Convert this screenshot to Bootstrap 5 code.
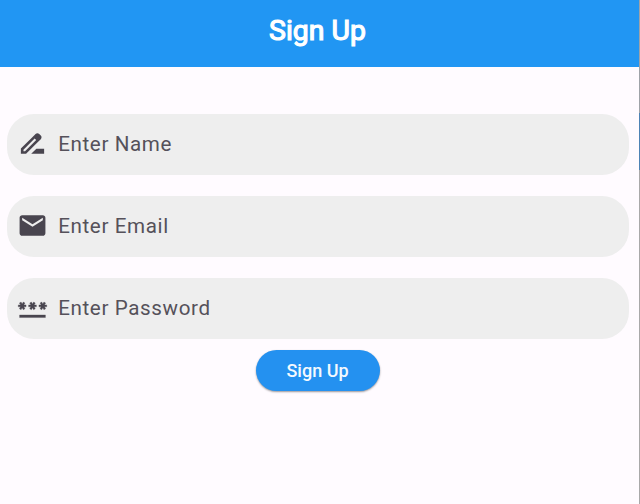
<!DOCTYPE html>
<html lang="en">
<head>
    <meta charset="UTF-8">
    <meta name="viewport" content="width=device-width, initial-scale=1.0">
    <title>Sign Up</title>
    <link href="https://cdn.jsdelivr.net/npm/bootstrap@5.3.0/dist/css/bootstrap.min.css" rel="stylesheet">
    <style>
        body {
            height: 504px;
            overflow: hidden;
            background: #fffbff;
            font-family: Roboto, sans-serif;
        }
        .app-bar {
            height: 67px;
            padding: 0 4px 4px 0;
            background-color: #2196f3;
        }
        .app-title {
            font-size: 28.4px;
            font-weight: 400;
            line-height: 1;
            -webkit-text-stroke: 1.2px #fff;
        }
        .signup-form {
            padding: 46.5px 10px 0 7px;
        }
        .field {
            height: 61.6px;
            margin-bottom: 20.6px;
            padding-left: 10px;
            border-radius: 27px;
            background-color: #eee;
        }
        .field:last-of-type {
            margin-bottom: 10.4px;
        }
        .field svg {
            width: 31px;
            height: 31px;
            margin-bottom: 1px;
            fill: #49454f;
            flex-shrink: 0;
        }
        .field .form-control {
            padding: 0 0 0 10.2px;
            font-size: 20.6px;
            letter-spacing: 0.62px;
            color: #49454f;
        }
        .field .form-control::placeholder {
            color: #55515a;
            opacity: 1;
        }
        .btn-signup {
            width: 124px;
            height: 41px;
            padding: 0 1px 0 0;
            font-size: 18px;
            font-weight: 500;
            color: #f4f9fe;
            background-color: #2491f0;
            box-shadow: 0 1px 2px rgba(0, 0, 0, 0.4);
        }
        /* Sliver of the window behind, along the right edge */
        .edge {
            width: 1px;
            background: linear-gradient(#9fa3a8 0 113px, #4d83b5 113px 170px, #a9a9a9 170px);
        }
    </style>
</head>
<body class="d-flex">
    <div class="flex-grow-1">
        <header class="app-bar d-flex align-items-center justify-content-center text-white">
            <h1 class="app-title mb-0">Sign Up</h1>
        </header>

        <form class="signup-form">
            <div class="field d-flex align-items-center">
                <svg viewBox="0 0 24 24"><path d="M18.41 5.8L17.2 4.59c-.78-.78-2.05-.78-2.83 0l-2.68 2.68L3 15.96V20h4.04l8.74-8.74 2.63-2.63c.79-.78.79-2.05 0-2.83zM6.21 18H5v-1.21l8.66-8.66 1.21 1.21L6.21 18zM11 20l4-4h6v4H11z"/></svg>
                <input type="text" class="form-control border-0 bg-transparent shadow-none" placeholder="Enter Name">
            </div>
            <div class="field d-flex align-items-center">
                <svg viewBox="0 0 24 24"><path d="M20 4H4c-1.1 0-1.99.9-1.99 2L2 18c0 1.1.9 2 2 2h16c1.1 0 2-.9 2-2V6c0-1.1-.9-2-2-2zm0 4l-8 5-8-5V6l8 5 8-5v2z"/></svg>
                <input type="email" class="form-control border-0 bg-transparent shadow-none" placeholder="Enter Email">
            </div>
            <div class="field d-flex align-items-center">
                <svg viewBox="0 0 24 24" stroke="#49454f" stroke-width=".25"><path d="M2 17h20v2H2v-2zm1.15-4.05L4 11.47l.85 1.48 1.3-.75-.85-1.48H7v-1.5H5.3l.85-1.47L4.85 7 4 8.47 3.15 7l-1.3.75.85 1.47H1v1.5h1.7l-.85 1.48 1.3.75zm6.7-.75l1.3.75.85-1.48.85 1.48 1.3-.75-.85-1.48H15v-1.5h-1.7l.85-1.47-1.3-.75L12 8.47 11.15 7l-1.3.75.85 1.47H9v1.5h1.7l-.85 1.48zM23 9.22h-1.7l.85-1.47-1.3-.75L20 8.47 19.15 7l-1.3.75.85 1.47H17v1.5h1.7l-.85 1.48 1.3.75.85-1.48.85 1.48 1.3-.75-.85-1.48H23v-1.5z"/></svg>
                <input type="password" class="form-control border-0 bg-transparent shadow-none" placeholder="Enter Password">
            </div>
            <button type="button" class="btn btn-signup rounded-pill border-0 d-block mx-auto">Sign Up</button>
        </form>
    </div>
    <div class="edge"></div>

    <script src="https://cdn.jsdelivr.net/npm/bootstrap@5.3.0/dist/js/bootstrap.bundle.min.js"></script>
</body>
</html>
